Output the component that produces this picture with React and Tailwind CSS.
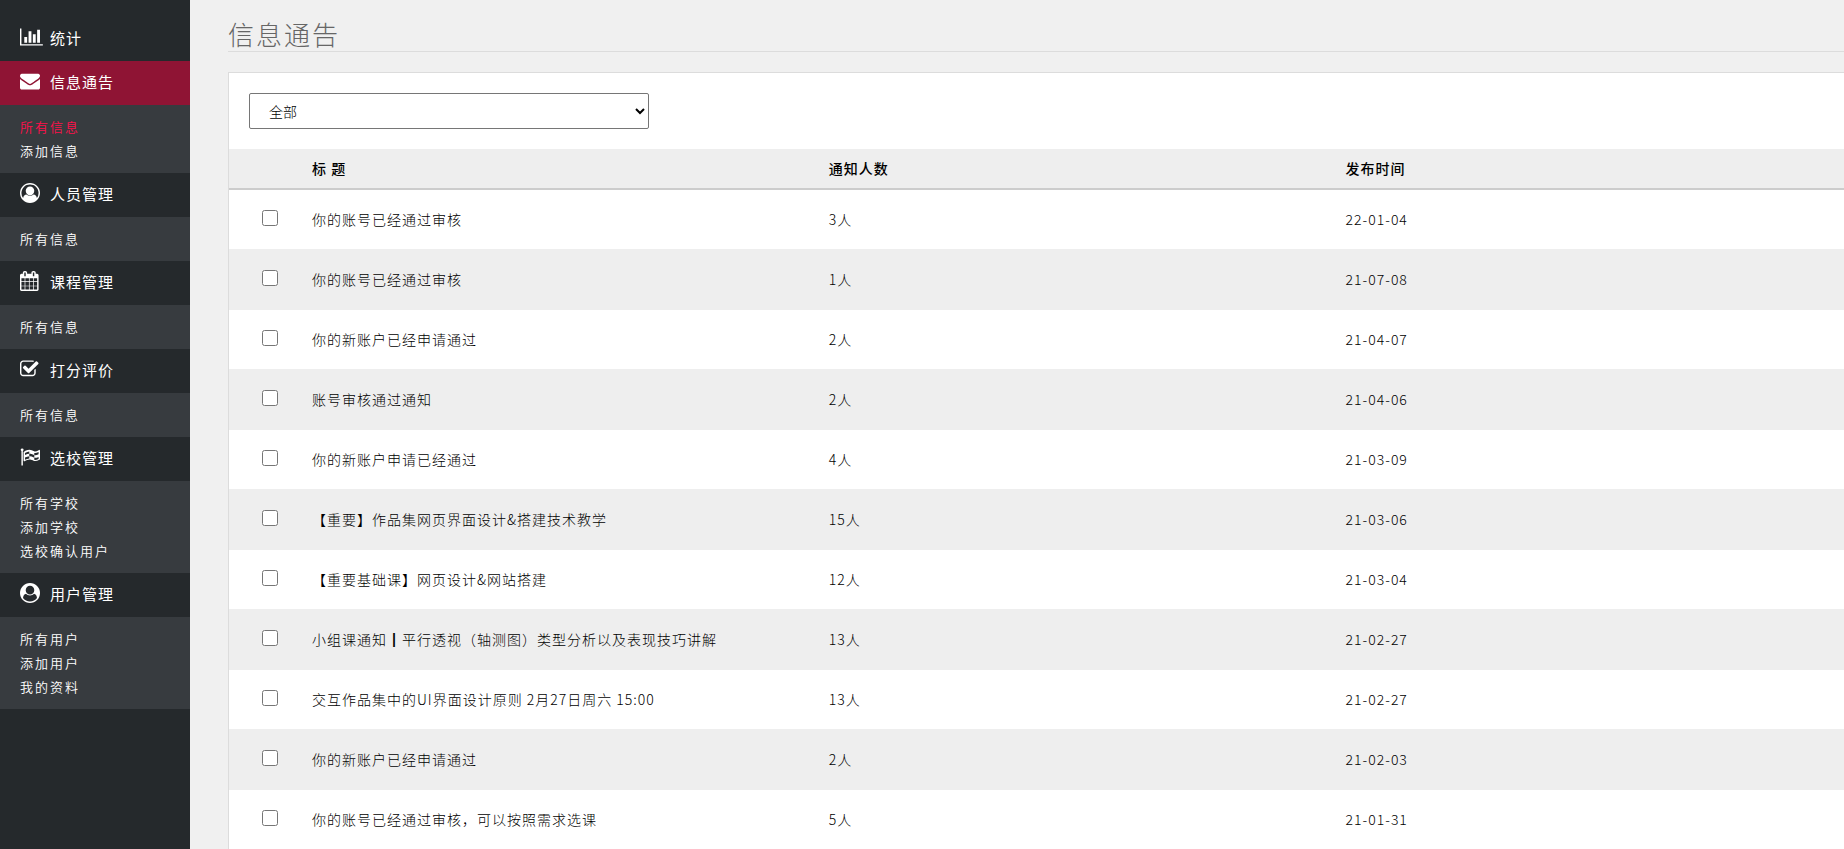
import React from 'react';

const icons = {
  chart: {
    width: 2048,
    d: 'M640 896v512H384V896h256zm384-512v1024H768V384h256zm1024 1152v128H0V128h128v1408h1920zm-640-896v768h-256V640h256zm384-384v1152h-256V256h256z',
  },
  envelope: {
    width: 1792,
    d: 'M1792 710v794q0 66-47 113t-113 47H160q-66 0-113-47T0 1504V710q44 49 101 87 362 246 497 345 57 42 92.500 65.500t94.500 48 110 24.500h2q51 0 110-24.500t94.500-48T1194 1142q170-123 498-345 57-39 100-87zm0-294q0 79-49 151t-122 123q-376 261-468 325-10 7-42.500 31t-54 38.800-52 33.200-57.500 27-50 9h-2q-23 0-50-9t-57.500-27-52-33.200-54-38.800-42.500-31q-91-64-262-182.500T173 690q-62-42-117-115.500T1 438q0-78 41.500-130T160 256h1472q65 0 112.500 47t47.500 113z',
  },
  person: {
    width: 1792,
    d: 'M896 0q182 0 348 71t286 191 191 286 71 348q0 181-70.500 347t-190.500 286-286 191.500-349 71.500-349-71-285.500-191.500-190.500-286T0 896t71-348 191-286T548 71 896 0zm619 1351q149-205 149-455 0-156-61-298t-164-245-245-164-298-61-298 61-245 164-164 245-61 298q0 250 149 455 66-327 306-327 131 128 313 128t313-128q240 0 306 327zM1280 704q0-159-112.500-271.500T896 320 624.500 432.500 512 704t112.500 271.500T896 1088t271.500-112.500T1280 704z',
  },
  calendar: {
    width: 1664,
    d: 'M128 1664h288v-288H128v288zm352 0h320v-288H480v288zM128 1312h288V992H128v320zm352 0h320V992H480v320zM128 928h288V640H128v288zm736 736h320v-288H864v288zM480 928h320V640H480v288zm768 736h288v-288h-288v288zM864 1312h320V992H864v320zM512 448V160q0-13-9.500-22.500T480 128h-64q-13 0-22.500 9.500T384 160v288q0 13 9.500 22.500T416 480h64q13 0 22.500-9.500T512 448zm736 864h288V992h-288v320zM864 928h320V640H864v288zm384 0h288V640h-288v288zm32-480V160q0-13-9.500-22.500T1248 128h-64q-13 0-22.500 9.500T1152 160v288q0 13 9.500 22.500t22.500 9.500h64q13 0 22.500-9.500T1280 448zm384-64v1280q0 52-38 90t-90 38H128q-52 0-90-38t-38-90V384q0-52 38-90t90-38h128v-96q0-66 47-113T416 0h64q66 0 113 47t47 113v96h384v-96q0-66 47-113T1184 0h64q66 0 113 47t47 113v96h128q52 0 90 38t38 90z',
  },
  check: {
    width: 1664,
    d: 'M1408 930v318q0 119-84.500 203.500T1120 1536H288q-119 0-203.500-84.500T0 1248V416q0-119 84.500-203.500T288 128h832q63 0 117 25 15 7 18 23 3 17-9 29l-49 49q-10 10-23 10-3 0-9-2-23-6-45-6H288q-66 0-113 47t-47 113v832q0 66 47 113t113 47h832q66 0 113-47t47-113V994q0-13 9-22l64-64q10-10 23-10 6 0 12 3 20 8 20 29zm231-489l-814 814q-24 24-57 24t-57-24L281 825q-24-24-24-57t24-57l110-110q24-24 57-24t57 24l263 263 647-647q24-24 57-24t57 24l110 110q24 24 24 57t-24 57z',
  },
  flag: {
    width: 1792,
    d: 'M832 1024V832q-181 16-384 117v185q205-96 384-110zm0-418V409q-172 8-384 126v189q215-111 384-118zm832 463V885q-235 116-384 71V732q-20-6-39-15-5-3-33-17t-34.500-17-31.500-15-34.500-15.500-32.500-13-36-12.500-35-8.500-39.500-7.500-39.500-4-44-2q-23 0-49 3v222h19q102 0 192.500 29t197.500 82q19 9 39 15v188q42 17 91 17 120 0 293-92zm0-427V453q-169 91-306 91-45 0-78-8v196q148 42 384-90zM320 256q0 35-17.500 64T256 366v1266q0 14-9 23t-23 9h-64q-14 0-23-9t-9-23V366q-29-17-46.500-46T64 256q0-53 37.500-90.500T192 128t90.500 37.500T320 256zm1472 64v763q0 39-35 57-10 5-17 9-218 116-369 116-88 0-158-35l-28-14q-64-33-99-48t-91-29-114-14q-102 0-235.500 44T417 1271q-15 9-33 9-16 0-32-8-32-19-32-56V474q0-35 31-55 35-21 78.500-42.500t114-52T696 275t155-19q112 0 209 31t209 86q38 19 89 19 122 0 310-112 22-12 31-17 31-16 62 2 31 20 31 55z',
  },
  user: {
    width: 1792,
    d: 'M1523 1339q-22-155-87.500-257.500T1251 963q-67 74-159.500 115.500T896 1120t-195.500-41.500T541 963q-119 16-184.500 118.500T269 1339q106 150 271 237.500t356 87.500 356-87.500 271-237.500zM1280 640q0-159-112.500-271.500T896 256 624.500 368.500 512 640t112.500 271.500T896 1024t271.500-112.500T1280 640zm512 256q0 182-71 347.500t-190.500 286T1244.500 1721 896 1792q-182 0-348-71t-286-191-191-286T0 896t71-348 191-286T548 71 896 0t348 71 286 191 191 286 71 348z',
  },
};

const menu = [
  { icon: 'chart', label: '统计', items: [] },
  { icon: 'envelope', label: '信息通告', active: true, items: ['所有信息', '添加信息'] },
  { icon: 'person', label: '人员管理', items: ['所有信息'] },
  { icon: 'calendar', label: '课程管理', items: ['所有信息'] },
  { icon: 'check', label: '打分评价', items: ['所有信息'] },
  { icon: 'flag', label: '选校管理', items: ['所有学校', '添加学校', '选校确认用户'] },
  { icon: 'user', label: '用户管理', items: ['所有用户', '添加用户', '我的资料'] },
];

const notices = [
  { title: '你的账号已经通过审核', count: 3, date: '22-01-04' },
  { title: '你的账号已经通过审核', count: 1, date: '21-07-08' },
  { title: '你的新账户已经申请通过', count: 2, date: '21-04-07' },
  { title: '账号审核通过通知', count: 2, date: '21-04-06' },
  { title: '你的新账户申请已经通过', count: 4, date: '21-03-09' },
  { title: '【重要】作品集网页界面设计&搭建技术教学', count: 15, date: '21-03-06' },
  { title: '【重要基础课】网页设计&网站搭建', count: 12, date: '21-03-04' },
  { title: '小组课通知┃平行透视（轴测图）类型分析以及表现技巧讲解', count: 13, date: '21-02-27' },
  { title: '交互作品集中的UI界面设计原则 2月27日周六 15:00', count: 13, date: '21-02-27' },
  { title: '你的新账户已经申请通过', count: 2, date: '21-02-03' },
  { title: '你的账号已经通过审核，可以按照需求选课', count: 5, date: '21-01-31' },
];

function MenuIcon({ name }) {
  const icon = icons[name];
  return (
    <span className="w-[30px] shrink-0">
      <svg className="h-5 w-auto fill-current" viewBox={`0 0 ${icon.width} 1792`} aria-hidden="true">
        <path d={icon.d} />
      </svg>
    </span>
  );
}

function Sidebar() {
  return (
    <nav className="w-[190px] shrink-0 bg-[#25292c] pt-[17px] text-white">
      {menu.map((group) => (
        <div key={group.label}>
          <a
            href="#"
            className={`flex h-11 items-start px-5 pt-[10px] text-[15px] leading-[22px] font-normal tracking-[1px] ${group.active ? 'bg-[#8f1434]' : ''}`}
          >
            <MenuIcon name={group.icon} />
            <span>{group.label}</span>
          </a>
          {group.items.length > 0 && (
            <ul className="bg-[#373b3f] px-5 py-[10px] text-[13px] leading-6">
              {group.items.map((item, idx) => (
                <li key={item}>
                  <a href="#" className={group.active && idx === 0 ? 'text-[#ff0f4b]' : ''}>{item}</a>
                </li>
              ))}
            </ul>
          )}
        </div>
      ))}
    </nav>
  );
}

function NoticeTable() {
  return (
    <table className="w-full table-fixed text-left text-sm leading-5 tracking-[1px] text-black">
      <thead>
        <tr className="h-10 border-b-2 border-[#ccc] bg-[#eee]">
          <th className="w-[73px]" aria-label="选择"></th>
          <th className="w-[32%] px-[10px] pb-0.5 font-medium">标 题</th>
          <th className="w-[32%] px-[10px] pb-0.5 font-medium">通知人数</th>
          <th className="px-[10px] pb-0.5 font-medium">发布时间</th>
        </tr>
      </thead>
      <tbody className="font-light">
        {notices.map((notice, idx) => (
          <tr key={idx} className="h-[60px] border-b border-[#eee] even:bg-[#eee]">
            <td className="pb-0.5 pl-[33px]">
              <input type="checkbox" aria-label={notice.title} className="block size-4" />
            </td>
            <td className="px-[10px]">{notice.title}</td>
            <td className="px-[10px]">{notice.count}人</td>
            <td className="px-[10px]">{notice.date}</td>
          </tr>
        ))}
      </tbody>
    </table>
  );
}

export default function App() {
  return (
    <div className="flex min-h-screen bg-[#f0f0f0] font-['Noto_Sans_CJK_SC',sans-serif] font-[350] tracking-[2px]">
      <Sidebar />
      <main className="min-w-0 flex-1 pl-[38px]">
        <h1 className="border-b border-[#dcdcdc] pt-4 text-[26px] leading-[35px] font-light text-[#666]">信息通告</h1>
        <section className="mt-5 border-t border-l border-[#dcdcdc] bg-white">
          <div className="p-5">
            <select
              aria-label="分类"
              className="block h-9 w-[400px] rounded-xs border border-[#767676] bg-white px-[15px] text-sm font-light tracking-normal text-black"
            >
              <option>全部</option>
            </select>
          </div>
          <NoticeTable />
        </section>
      </main>
    </div>
  );
}
